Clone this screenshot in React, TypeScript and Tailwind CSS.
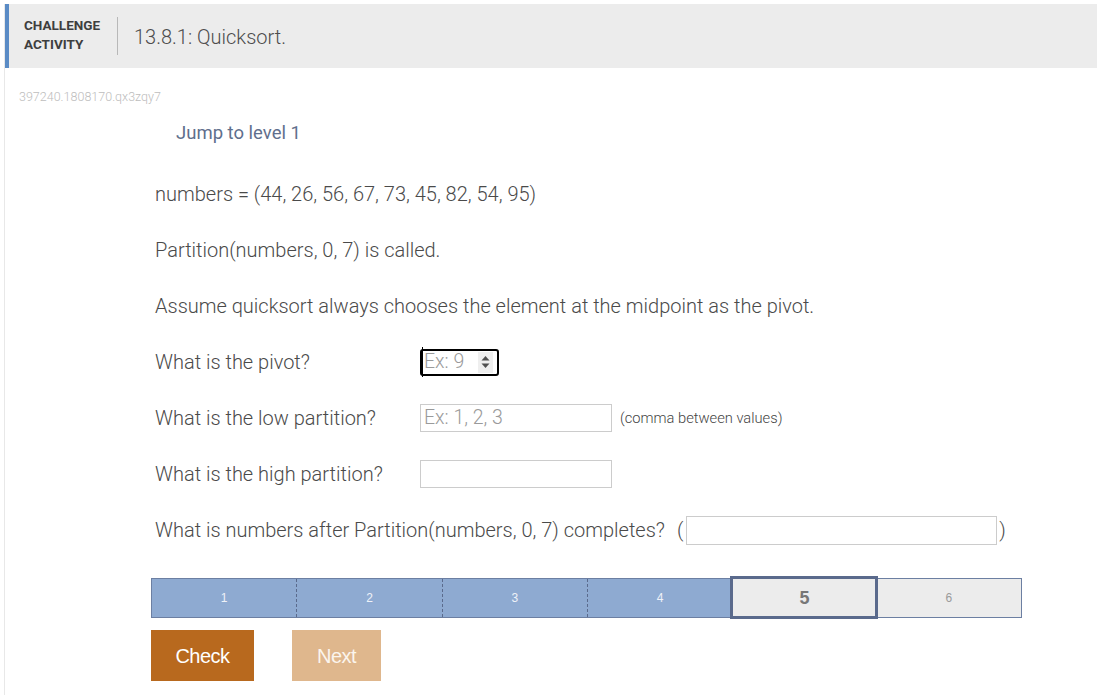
import React from "react";

const segs = [1, 2, 3, 4, 5, 6];

export default function App() {
  return (
    <div className="w-[1097px] h-[695px] bg-white overflow-hidden font-['Roboto',sans-serif]">
      <div className="mt-[4px] ml-[4px] h-[691px] border-l border-[#e8e8e8] flex flex-col">
        {/* Header */}
        <div className="h-[64px] bg-[#ececec] border-l-4 border-[#5a8bc5] flex items-center pl-[15px]">
          <div className="text-[13.5px] leading-[19px] font-bold text-[#3e3e3e] w-[78px] -mt-[3px]">
            CHALLENGE
            <br />
            ACTIVITY
          </div>
          <div className="ml-[15px] w-px h-[38px] bg-[#b8b8b8]" />
          <div className="ml-[16px] text-[20px] font-light text-[#4d4d4d] mt-[1px]">13.8.1: Quicksort.</div>
        </div>

        {/* ID */}
        <div className="mt-[21px] ml-[14px] text-[12.5px] leading-[16px] font-light text-[#bdbdbd]">
          397240.1808170.qx3zqy7
        </div>

        {/* Jump */}
        <div className="mt-[16px] ml-[171px] text-[18.5px] leading-[24px] text-[#5f6f8d]">Jump to level 1</div>

        {/* Content */}
        <div className="mt-[21px] ml-[150px] text-[20px] font-light text-[#4a4a4a] flex flex-col">
          <div className="h-[56px] flex items-center">numbers = (44, 26, 56, 67, 73, 45, 82, 54, 95)</div>
          <div className="h-[56px] flex items-center">Partition(numbers, 0, 7) is called.</div>
          <div className="h-[56px] flex items-center">Assume quicksort always chooses the element at the midpoint as the pivot.</div>

          <div className="h-[56px] flex items-center">
            <div className="w-[265px]">What is the pivot?</div>
            <div className="w-[79px] h-[27px] border-2 border-black rounded-[3px] flex items-center bg-white">
              <input
                placeholder="Ex: 9"
                className="w-[56px] pl-[1px] bg-transparent outline-none text-[19.5px] font-light text-[#4a4a4a] placeholder:text-[#9a9a9a] border-l border-black"
              />
              <div className="w-[15px] h-[21px] bg-[#efefef] flex items-center justify-center">
                <svg width="9" height="14" viewBox="0 0 9 14">
                  <path d="M4.5 1 L8.5 5.5 L0.5 5.5 Z" fill="#505050" />
                  <path d="M4.5 13 L8.5 8.5 L0.5 8.5 Z" fill="#505050" />
                </svg>
              </div>
            </div>
          </div>

          <div className="h-[56px] flex items-center">
            <div className="w-[265px]">What is the low partition?</div>
            <input
              placeholder="Ex: 1, 2, 3"
              className="w-[192px] h-[28px] border border-[#cccccc] px-[3px] outline-none text-[19.5px] font-light text-[#4a4a4a] placeholder:text-[#9a9a9a]"
            />
            <div className="ml-[8px] text-[14.7px] font-light text-[#444444]">(comma between values)</div>
          </div>

          <div className="h-[56px] flex items-center">
            <div className="w-[265px]">What is the high partition?</div>
            <input className="w-[192px] h-[28px] border border-[#cccccc] px-[3px] outline-none text-[18px] font-light" />
          </div>

          <div className="h-[56px] flex items-center">
            <div>What is numbers after Partition(numbers, 0, 7) completes?</div>
            <span className="ml-[12px]">(</span>
            <input className="ml-[3px] w-[311px] h-[29px] border border-[#cccccc] px-[3px] outline-none text-[18px] font-light" />
            <span className="ml-[2px]">)</span>
          </div>
        </div>

        {/* Progress */}
        <div className="mt-[20px] ml-[146px] w-[871px] h-[40px] border border-[#6c7fa2] flex font-['Liberation_Sans',Arial,sans-serif]">
          {segs.map((n) => {
            if (n === 5) {
              return (
                <div key={n} className="relative flex-1 bg-[#ececec] flex items-center justify-center">
                  <div className="absolute -top-[3px] -bottom-[2px] -left-[2px] -right-[1px] border-[3px] border-[#5a6a8c]" />
                  <span className="text-[18px] font-bold text-[#777777]">5</span>
                </div>
              );
            }
            if (n === 6) {
              return (
                <div key={n} className="flex-1 bg-[#ececec] flex items-center justify-center text-[12px] text-[#9a9a9a]">
                  6
                </div>
              );
            }
            return (
              <div
                key={n}
                className={
                  n < 4
                    ? "flex-1 bg-[#8eaad1] border-r border-dashed border-[#5a6a8c] flex items-center justify-center text-[12px] text-[#eef2f8]"
                    : "flex-1 bg-[#8eaad1] flex items-center justify-center text-[12px] text-[#eef2f8]"
                }
              >
                {n}
              </div>
            );
          })}
        </div>

        {/* Buttons */}
        <div className="mt-[12px] ml-[146px] flex gap-[38px] font-['Liberation_Sans',Arial,sans-serif]">
          <button className="w-[103px] h-[51px] bg-[#b8691e] text-white text-[20px] tracking-[-0.5px]">Check</button>
          <button className="w-[89px] h-[51px] bg-[#dfb78d] text-[#fbf5ee] text-[20px] tracking-[-0.5px]">Next</button>
        </div>
      </div>
    </div>
  );
}
